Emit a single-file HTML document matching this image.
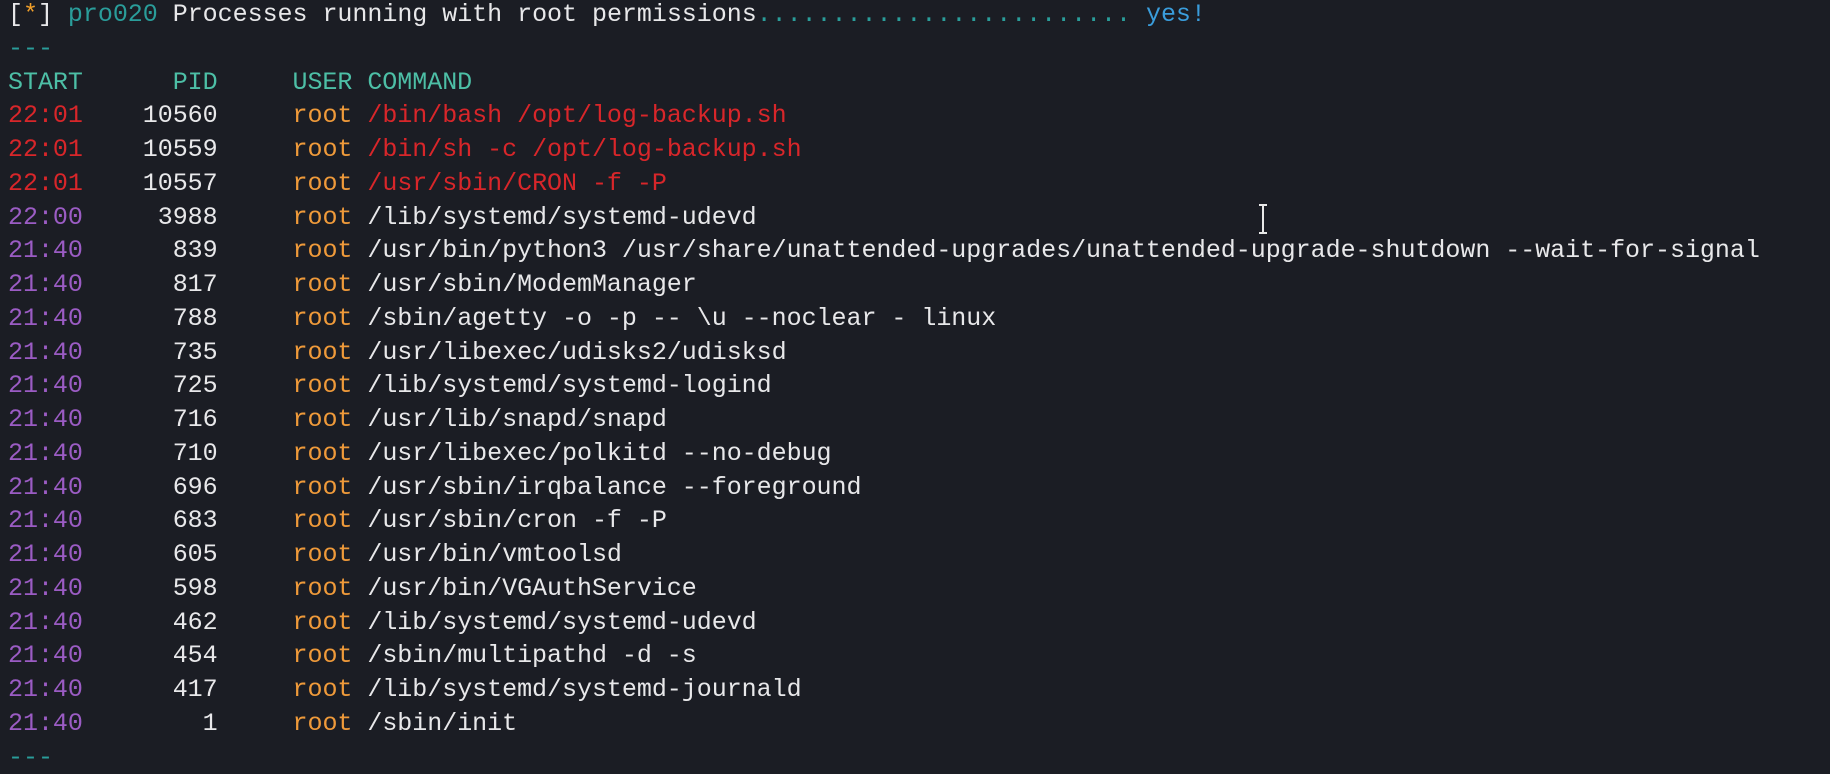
<!DOCTYPE html>
<html><head><meta charset="utf-8"><style>
html,body{margin:0;padding:0;background:#1b1d24;width:1830px;height:762px;overflow:hidden}
pre{margin:0;position:absolute;left:8px;top:-2px;font-family:"Liberation Mono","DejaVu Sans Mono",monospace;font-size:25px;letter-spacing:-0.03px;line-height:33.75px;color:#e8e8ea}
.t{color:#2a9d9a}.h{color:#4dbfa6}.r{color:#d8262a}.p{color:#9b5cc4}.o{color:#ef9a3a}.b{color:#3a9ddc}.y{color:#f2a02a}
.cur{position:absolute;left:1258px;top:204px;width:10px;height:30px}
</style></head><body>
<pre>[<span class="y">*</span>] <span class="t">pro020</span> Processes running with root permissions<span class="t">.........................</span> <span class="b">yes!</span>
<span class="t">---</span>
<span class="h">START      PID     USER COMMAND</span>
<span class="r">22:01</span>    10560     <span class="o">root</span> <span class="r">/bin/bash /opt/log-backup.sh</span>
<span class="r">22:01</span>    10559     <span class="o">root</span> <span class="r">/bin/sh -c /opt/log-backup.sh</span>
<span class="r">22:01</span>    10557     <span class="o">root</span> <span class="r">/usr/sbin/CRON -f -P</span>
<span class="p">22:00</span>     3988     <span class="o">root</span> /lib/systemd/systemd-udevd
<span class="p">21:40</span>      839     <span class="o">root</span> /usr/bin/python3 /usr/share/unattended-upgrades/unattended-upgrade-shutdown --wait-for-signal
<span class="p">21:40</span>      817     <span class="o">root</span> /usr/sbin/ModemManager
<span class="p">21:40</span>      788     <span class="o">root</span> /sbin/agetty -o -p -- \u --noclear - linux
<span class="p">21:40</span>      735     <span class="o">root</span> /usr/libexec/udisks2/udisksd
<span class="p">21:40</span>      725     <span class="o">root</span> /lib/systemd/systemd-logind
<span class="p">21:40</span>      716     <span class="o">root</span> /usr/lib/snapd/snapd
<span class="p">21:40</span>      710     <span class="o">root</span> /usr/libexec/polkitd --no-debug
<span class="p">21:40</span>      696     <span class="o">root</span> /usr/sbin/irqbalance --foreground
<span class="p">21:40</span>      683     <span class="o">root</span> /usr/sbin/cron -f -P
<span class="p">21:40</span>      605     <span class="o">root</span> /usr/bin/vmtoolsd
<span class="p">21:40</span>      598     <span class="o">root</span> /usr/bin/VGAuthService
<span class="p">21:40</span>      462     <span class="o">root</span> /lib/systemd/systemd-udevd
<span class="p">21:40</span>      454     <span class="o">root</span> /sbin/multipathd -d -s
<span class="p">21:40</span>      417     <span class="o">root</span> /lib/systemd/systemd-journald
<span class="p">21:40</span>        1     <span class="o">root</span> /sbin/init
<span class="t">---</span></pre>
<svg class="cur" viewBox="0 0 10 30"><path d="M1 1h8M5 1v28M1 29h8" stroke="#e8e8e8" stroke-width="2" fill="none"/></svg>
</body></html>
